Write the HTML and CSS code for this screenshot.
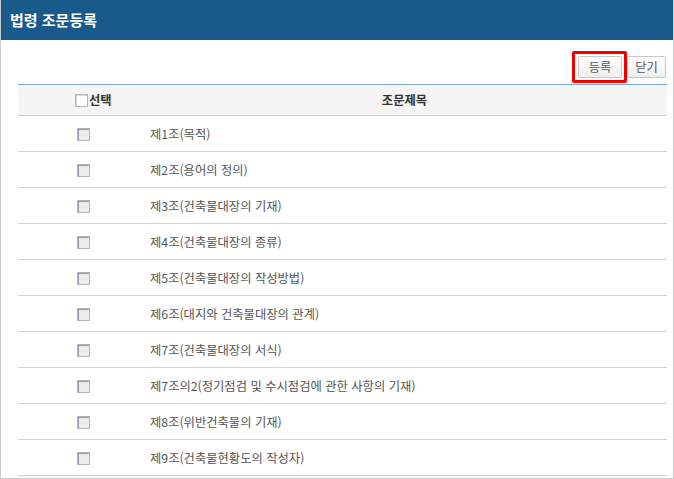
FILE: index.html
```html
<!DOCTYPE html>
<html lang="ko">
<head>
<meta charset="utf-8">
<link rel="stylesheet" href="styles.css">
</head>
<body>
<div class="panel">
  <div class="titlebar">법령 조문등록</div>
  <div class="content">
    <div class="toolbar">
      <span class="btn-wrap"><button class="btn btn-reg">등록</button><span class="highlight"></span></span>
      <button class="btn btn-close">닫기</button>
    </div>
    <table class="list">
      <thead>
        <tr>
          <th class="col-check"><span class="cb cb-head"></span>선택</th>
          <th class="col-title">조문제목</th>
        </tr>
      </thead>
      <tbody>
        <tr><td class="cell-check"><span class="cb"></span></td><td class="cell-title">제1조(목적)</td></tr>
        <tr><td class="cell-check"><span class="cb"></span></td><td class="cell-title">제2조(용어의 정의)</td></tr>
        <tr><td class="cell-check"><span class="cb"></span></td><td class="cell-title">제3조(건축물대장의 기재)</td></tr>
        <tr><td class="cell-check"><span class="cb"></span></td><td class="cell-title">제4조(건축물대장의 종류)</td></tr>
        <tr><td class="cell-check"><span class="cb"></span></td><td class="cell-title">제5조(건축물대장의 작성방법)</td></tr>
        <tr><td class="cell-check"><span class="cb"></span></td><td class="cell-title">제6조(대지와 건축물대장의 관계)</td></tr>
        <tr><td class="cell-check"><span class="cb"></span></td><td class="cell-title">제7조(건축물대장의 서식)</td></tr>
        <tr><td class="cell-check"><span class="cb"></span></td><td class="cell-title">제7조의2(정기점검 및 수시점검에 관한 사항의 기재)</td></tr>
        <tr><td class="cell-check"><span class="cb"></span></td><td class="cell-title">제8조(위반건축물의 기재)</td></tr>
        <tr><td class="cell-check"><span class="cb"></span></td><td class="cell-title">제9조(건축물현황도의 작성자)</td></tr>
      </tbody>
    </table>
  </div>
</div>
</body>
</html>
```

FILE: styles.css
```css
html, body {
  margin: 0;
  padding: 0;
  background: #ffffff;
}
body {
  font-family: "Noto Sans CJK KR", "Noto Sans", sans-serif;
  font-size: 12.3px;
  color: #555555;
}
.panel {
  width: 672px;
  height: 478px;
  border: 1px solid #cccccc;
  border-top: 0;
  overflow: hidden;
}
.titlebar {
  height: 40px;
  background: #185b8b;
  color: #ffffff;
  font-weight: bold;
  font-size: 15px;
  line-height: 40px;
  padding-left: 10px;
  margin: 0 -1px;
}
.content {
  padding: 0 6px 0 17px;
}
.toolbar {
  display: flex;
  justify-content: flex-end;
  gap: 5px;
  padding-top: 16px;
  margin-bottom: 6px;
  margin-right: 1px;
}
.btn-wrap {
  position: relative;
  display: flex;
}
.btn {
  height: 22px;
  margin: 0;
  padding: 0;
  border: 1px solid #c8c8c8;
  border-radius: 2px;
  background: linear-gradient(#ffffff, #eeeeee);
  font-family: "Noto Sans CJK KR", "Noto Sans", sans-serif;
  font-size: 12.3px;
  color: #555555;
  line-height: 20px;
}
.btn-reg { width: 44px; }
.btn-close { width: 39px; }
.highlight {
  position: absolute;
  left: -6px;
  top: -5px;
  width: 49px;
  height: 26px;
  border: 3px solid #ee0000;
  border-radius: 2px;
}
.list {
  width: 649px;
  border-collapse: collapse;
  table-layout: fixed;
}
.list thead tr {
  background: #f5f5f5;
  border-top: 1px solid #7ea6c9;
  border-bottom: 1px solid #cccccc;
}
.list th {
  height: 30px;
  padding: 0;
  font-weight: bold;
  color: #333333;
  font-size: 12.3px;
}
.list th.col-check {
  width: 73px;
  text-align: left;
  padding-left: 57px;
}
.list th.col-title {
  text-align: center;
  padding-right: 6px;
}
.list tbody tr {
  border-bottom: 1px solid #d2d2d2;
}
.list td {
  height: 35px;
  padding: 0;
}
.cell-check {
  text-align: center;
}
.list td.cell-title {
  padding-left: 2px;
  color: #555555;
}
.cb {
  display: inline-block;
  width: 11px;
  height: 11px;
  border: 1px solid #b4b4b4;
  background: #ececec;
  box-shadow: inset 1px 1px 0 #8e9bb0;
  vertical-align: middle;
  position: relative;
  top: -1px;
}
.cb-head {
  background: #ffffff;
  box-shadow: inset 1px 1px 0 #d6d6d6;
  margin-right: 1px;
}
```
